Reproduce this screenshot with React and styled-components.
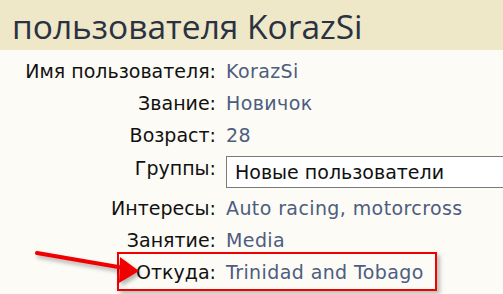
import React from "react";
import styled, { createGlobalStyle } from "styled-components";

const Global = createGlobalStyle`
  html, body { margin: 0; padding: 0; background: #fcfbf6; overflow: hidden; }
  body { width: 503px; height: 294px; }
`;

const Page = styled.div`
  position: relative;
  width: 503px;
  height: 294px;
  overflow: hidden;
  background: #fcfbf6;
  font-family: "DejaVu Sans", Verdana, sans-serif;
`;

const Header = styled.div`
  height: 50px;
  background: #eee7c8;
  display: flex;
  align-items: center;
  padding-left: 12px;
`;

const Title = styled.h1`
  margin: 0;
  font-family: "Open Sans", "DejaVu Sans", sans-serif;
  font-weight: 400;
  font-size: 33.5px;
  color: #2a3241;
  white-space: nowrap;
  position: relative;
  top: 1px;
`;

const Table = styled.div`
  padding-top: 5px;
  display: flex;
  flex-direction: column;
`;

const Row = styled.div`
  position: relative;
  display: grid;
  grid-template-columns: 216px 1fr;
  column-gap: 10px;
  height: ${(p) => (p.$tall ? "41px" : "32px")};
  line-height: 32px;
  font-size: 19px;
  white-space: nowrap;
`;

const Label = styled.div`
  text-align: right;
  color: #111;
  padding-top: ${(p) => (p.$tall ? "1px" : "0")};
`;

const Value = styled.div`
  color: #4d5d80;
  letter-spacing: 0.4px;
`;

const Select = styled.div`
  margin-top: 4px;
  height: 30px;
  width: 320px;
  box-sizing: content-box;
  border: 1px solid #7a7a7a;
  background: #fff;
  color: #111;
  line-height: 30px;
  padding-left: 8px;
  position: relative;
  top: 1px;
`;

const Highlight = styled.div`
  position: absolute;
  left: 117px;
  top: -4px;
  width: 320px;
  height: 39px;
  box-sizing: border-box;
  border: 2.5px solid #f00000;
  box-shadow: 3px 3px 4px rgba(0, 0, 0, 0.25);
  pointer-events: none;
`;

const Arrow = styled.svg`
  position: absolute;
  left: 0;
  top: 0;
  overflow: visible;
  filter: drop-shadow(2px 3px 2px rgba(0, 0, 0, 0.3));
`;

const rows = [
  ["Имя пользователя:", "KorazSi"],
  ["Звание:", "Новичок"],
  ["Возраст:", "28"],
];

export default function App() {
  return (
    <Page>
      <Global />
      <Header>
        <Title>пользователя KorazSi</Title>
      </Header>
      <Table>
        {rows.map(([l, v]) => (
          <Row key={l}>
            <Label>{l}</Label>
            <Value>{v}</Value>
          </Row>
        ))}
        <Row $tall>
          <Label $tall>Группы:</Label>
          <Select>Новые пользователи</Select>
        </Row>
        <Row>
          <Label>Интересы:</Label>
          <Value>Auto racing, motorcross</Value>
        </Row>
        <Row>
          <Label>Занятие:</Label>
          <Value>Media</Value>
        </Row>
        <Row>
          <Label>Откуда:</Label>
          <Value>Trinidad and Tobago</Value>
          <Highlight />
        </Row>
      </Table>
      <Arrow width="503" height="294" viewBox="0 0 503 294">
        <line x1="37" y1="253" x2="124" y2="268" stroke="#f00000" strokeWidth="4" strokeLinecap="round" />
        <polygon points="120,257 139,271 119,283" fill="#f00000" />
      </Arrow>
    </Page>
  );
}
